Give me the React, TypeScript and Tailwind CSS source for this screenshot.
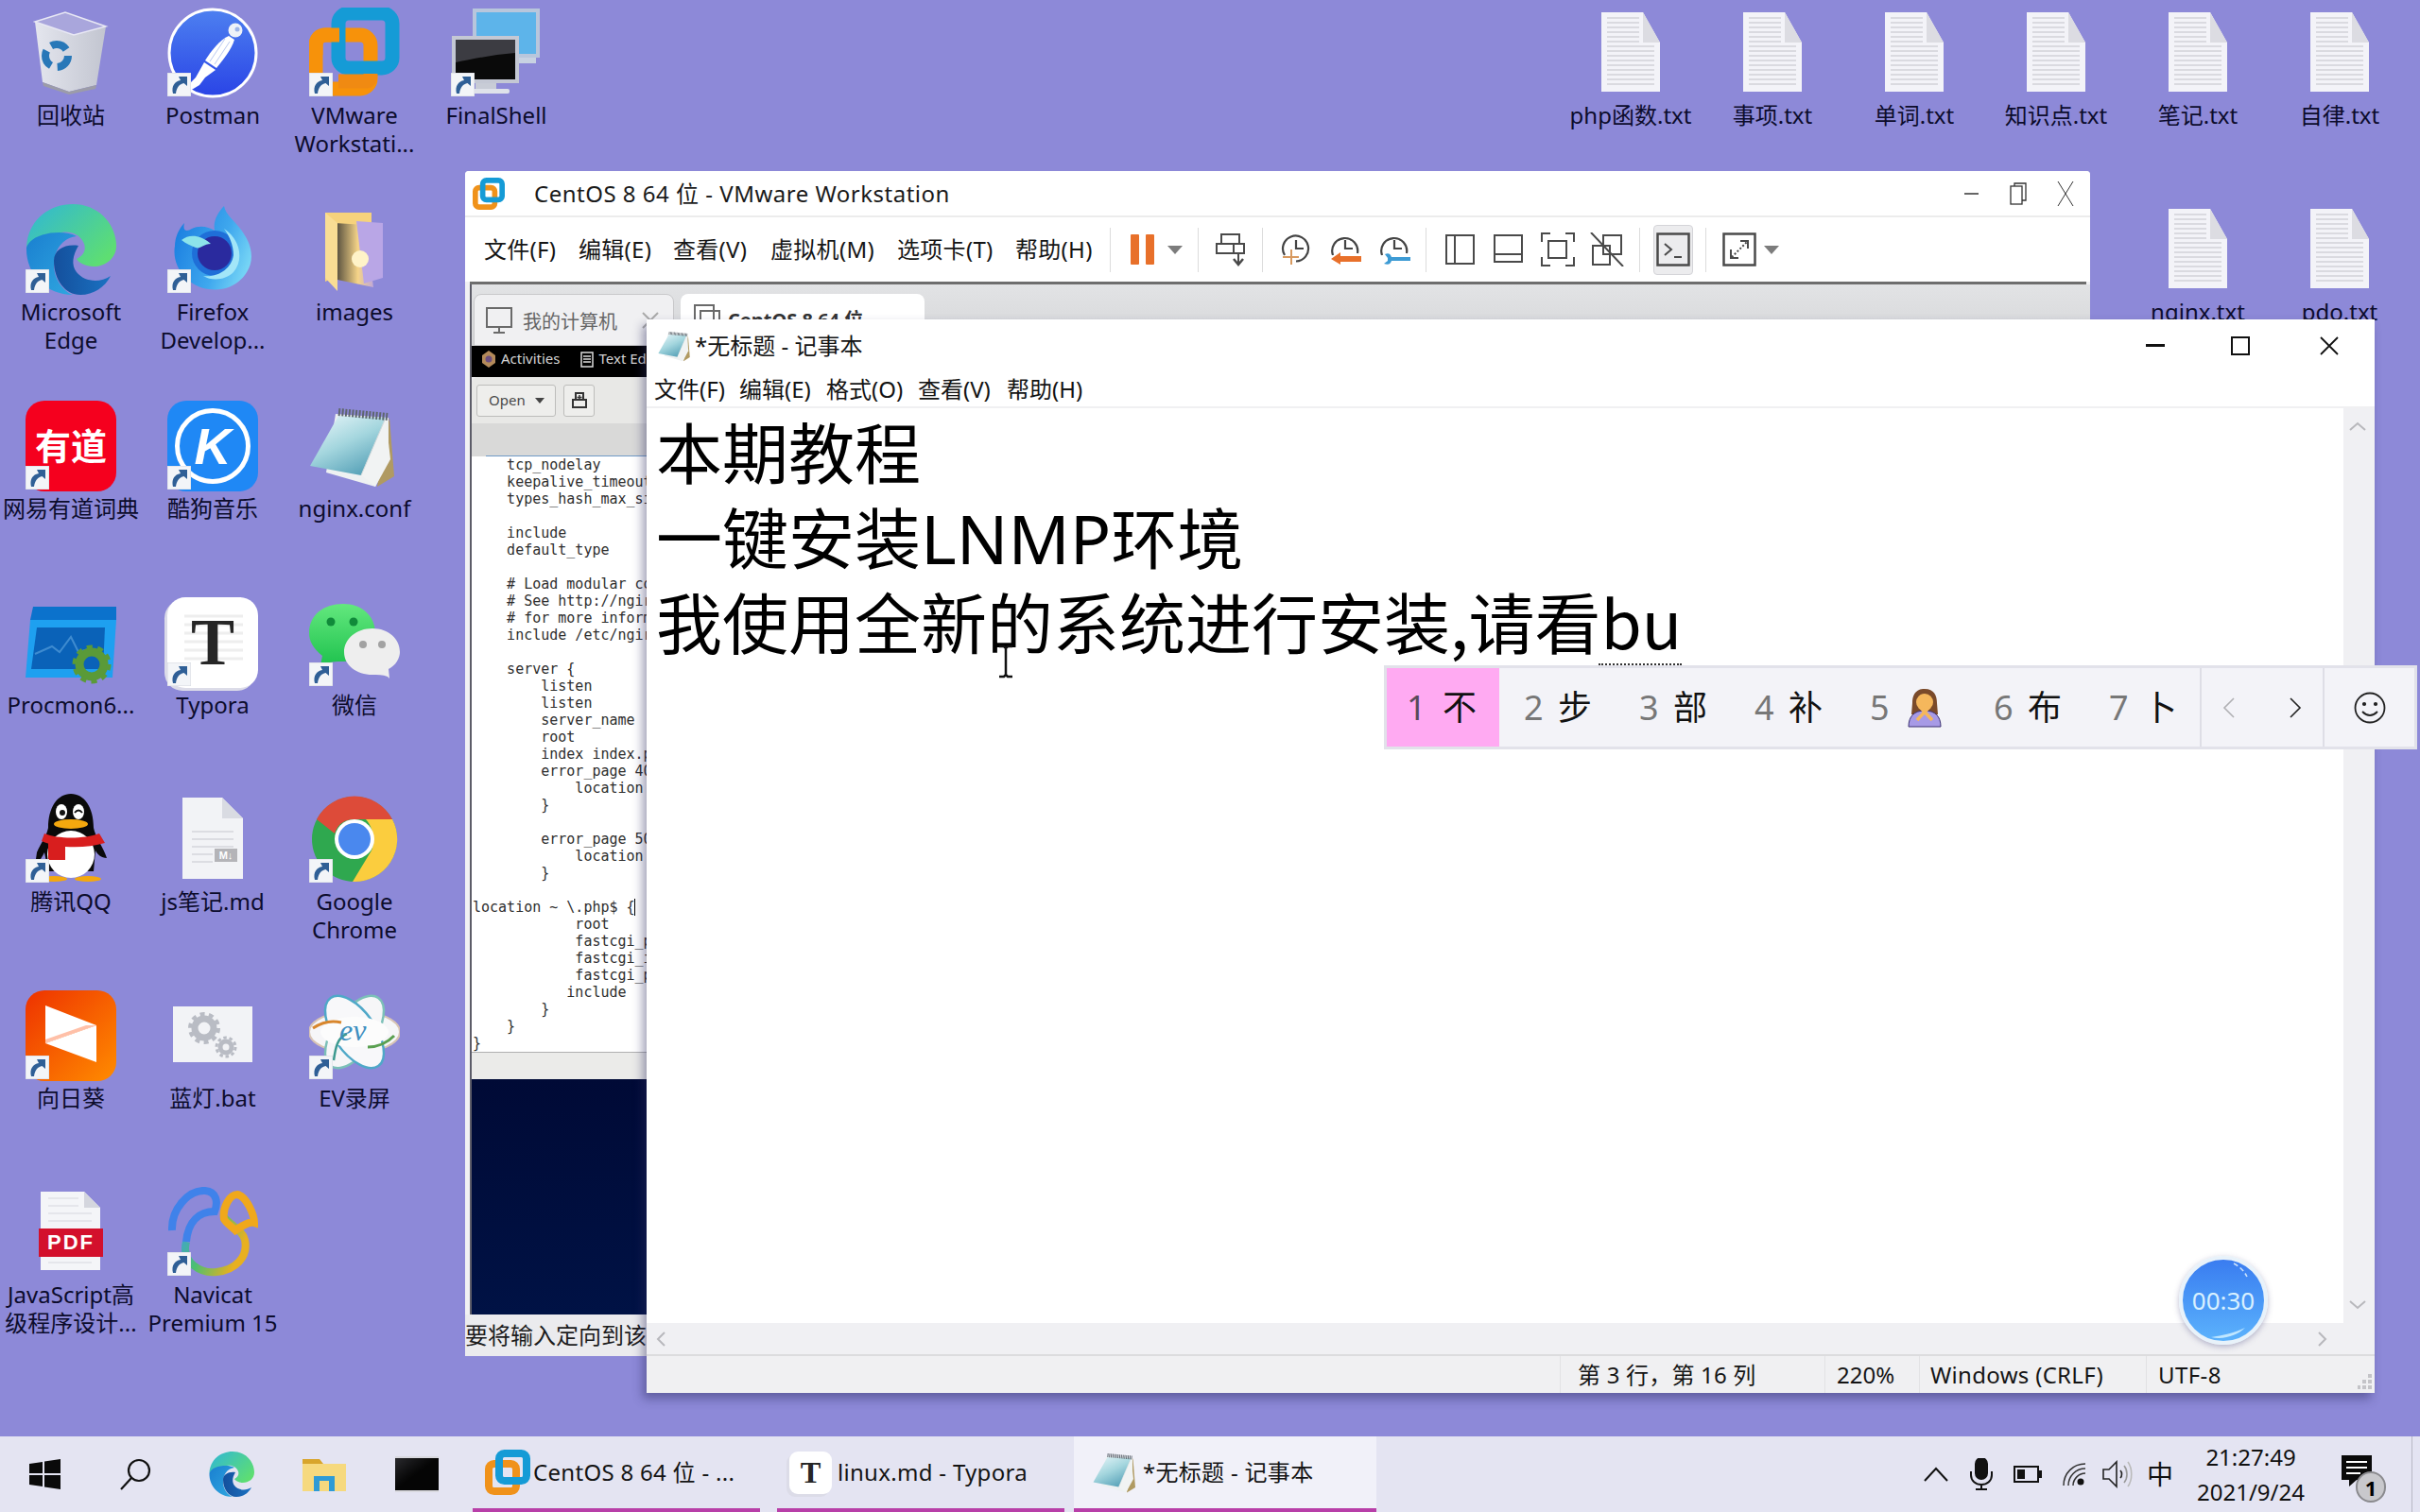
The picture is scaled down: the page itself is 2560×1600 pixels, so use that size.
import React from "react";

const UI = "font-[family-name:'Noto_Sans','Noto_Sans_CJK_SC',sans-serif]";

const Arrow = () => (
  <svg width="25" height="25" viewBox="0 0 25 25" className="absolute left-0 top-[69px]">
    <rect x="0" y="0" width="25" height="25" fill="#f3f5f8" stroke="#d5d8e0" />
    <path d="M6 22 C4 14 8 9 14 8 L12 4 L21 4 L21 14 L17.5 11 C13 12 10 15 9 22Z" fill="#2f5f96" />
  </svg>
);

const S = ({ children, className }: { children: React.ReactNode; className?: string }) => (
  <svg width="96" height="96" viewBox="0 0 96 96" className={className}>{children}</svg>
);

const Recycle = () => (
  <S>
    <defs><linearGradient id="rb" x1="0" x2="1"><stop offset="0" stopColor="#e4e6ee" /><stop offset="1" stopColor="#c2c5d0" /></linearGradient></defs>
    <polygon points="10,15 18,79 46,89 75,82 85,20 51,29" fill="url(#rb)" />
    <polygon points="10,15 42,5 85,20 51,29" fill="#a9a6dc" stroke="#e8e8f4" strokeWidth="1.5" />
    <polygon points="18,79 46,89 75,82 74,86 46,92 19,83" fill="#9c9ca8" />
    <circle cx="33" cy="51" r="12" fill="none" stroke="#2878b8" strokeWidth="8" strokeDasharray="18 7" />
  </S>
);
const Postman = () => (
  <S>
    <defs><linearGradient id="pm" x1="0" x2="0" y1="0" y2="1"><stop offset="0" stopColor="#4d80f0" /><stop offset="1" stopColor="#2a44e6" /></linearGradient></defs>
    <ellipse cx="48" cy="48" rx="46" ry="46" fill="url(#pm)" stroke="#fff" strokeWidth="3" />
    <circle cx="72" cy="24" r="7.5" fill="#eef2f8" />
    <circle cx="74" cy="23" r="2.5" fill="#9db4e8" />
    <path d="M65 30 C56 34 46 46 40 56 L46 60 L52 64 C60 54 68 44 71 34Z" fill="#fff" />
    <path d="M39 58 L51 66 L40 74 L34 82 L24 88 L20 84 L30 74Z" fill="#fff" />
    <path d="M50 60 L66 36 M45 57 L61 33" stroke="#b9c8f0" strokeWidth="1" />
  </S>
);
const VMware = () => (
  <S>
    <rect x="7" y="29" width="58" height="57" rx="11" fill="none" stroke="#f7920a" strokeWidth="15" />
    <rect x="31" y="6" width="57" height="58" rx="11" fill="none" stroke="#159bd6" strokeWidth="15" />
    <path d="M7 50 L7 40 Q7 29 18 29 L32 29" fill="none" stroke="#f7920a" strokeWidth="15" />
    <path d="M31 78 L60 78 Q65 78 65 70" fill="none" stroke="#f08a12" strokeWidth="15" />
  </S>
);
const FinalShell = () => (
  <S>
    <rect x="23" y="1" width="71" height="52" fill="#b8c6dc" />
    <rect x="27" y="5" width="63" height="44" fill="#5db4ea" />
    <rect x="46" y="53" width="44" height="6" fill="#c8d2e2" />
    <rect x="1" y="30" width="71" height="50" fill="#c4c8d4" />
    <rect x="5" y="34" width="63" height="42" fill="#0a0a0a" />
    <path d="M5 34 H68 V48 C44 50 24 54 5 58Z" fill="#3c3c42" />
    <rect x="26" y="80" width="22" height="6" fill="#c8ccd6" />
    <rect x="16" y="86" width="46" height="5" rx="2" fill="#dfe2ea" />
  </S>
);
const Edge = () => (
  <S>
    <defs>
      <linearGradient id="e1" x1="0" x2="1" y1="0" y2="0.7"><stop offset="0" stopColor="#2fb6d8" /><stop offset="1" stopColor="#5ede72" /></linearGradient>
      <linearGradient id="e2" x1="0" x2="1" y1="0" y2="1"><stop offset="0" stopColor="#1a7fd0" /><stop offset="1" stopColor="#30a8e0" /></linearGradient>
      <linearGradient id="e3" x1="0" x2="1"><stop offset="0" stopColor="#144f9c" /><stop offset="1" stopColor="#1a72c2" /></linearGradient>
    </defs>
    <path d="M1 46 C2 18 24 0 50 0 C78 0 96 22 96 44 C96 58 84 66 72 66 C64 66 56 62 54 58 C62 54 64 48 62 42 C58 32 48 28 38 30 C20 32 4 38 1 46Z" fill="url(#e1)" />
    <path d="M1 46 C0 74 22 96 50 96 C40 92 30 80 30 64 C30 50 38 36 54 34 C40 26 6 30 1 46Z" fill="url(#e2)" />
    <path d="M30 60 C30 80 42 96 58 96 C72 96 84 88 90 76 C78 84 62 82 54 72 C48 64 50 54 56 44 C42 42 30 48 30 60Z" fill="url(#e3)" />
  </S>
);
const Firefox = () => (
  <S>
    <defs>
      <linearGradient id="ff" x1="0" x2="1" y1="0.3" y2="0.7"><stop offset="0" stopColor="#1a7ee0" /><stop offset="0.6" stopColor="#3fa8ee" /><stop offset="1" stopColor="#7ad8f6" /></linearGradient>
    </defs>
    <path d="M8 44 C8 36 12 26 18 20 C16 28 20 30 26 26 C34 22 44 24 50 28 C48 18 54 8 60 2 C62 12 72 18 80 30 C90 44 92 60 84 72 C74 88 58 92 44 90 C24 88 4 68 8 44Z" fill="url(#ff)" />
    <circle cx="50" cy="52" r="24" fill="#1f6fd8" />
    <circle cx="50" cy="52" r="18" fill="#2a2a9e" />
    <path d="M15 38 C24 30 38 34 46 42 C38 42 35 48 30 46 C25 44 20 42 15 38Z" fill="#8ce4ea" />
    <path d="M60 26 C76 36 82 58 70 72 C62 80 48 82 38 76 C54 78 68 68 70 54 C70 44 66 34 60 26Z" fill="#a2e6f8" />
  </S>
);
const Folder = () => (
  <S>
    <defs><linearGradient id="sun" x1="0" x2="1" y1="0" y2="0"><stop offset="0" stopColor="#4a4438" /><stop offset="0.6" stopColor="#f5d488" /><stop offset="1" stopColor="#c0a8d8" /></linearGradient></defs>
    <polygon points="17,9 66,9 66,60 17,82" fill="#f6d27c" />
    <polygon points="27,20 60,22 68,88 30,80" fill="url(#sun)" />
    <polygon points="50,18 78,20 78,78 58,84" fill="#b9a6e6" />
    <circle cx="54" cy="58" r="9" fill="#fff3c8" />
    <polygon points="17,9 30,20 30,92 17,78" fill="#f9dd94" />
  </S>
);
const Youdao = () => (
  <div className="w-[96px] h-[96px] rounded-[20px] bg-[#f5001e] flex items-center justify-center text-white font-bold text-[38px] leading-none pb-[2px]">有道</div>
);
const Kugou = () => (
  <div className="w-[96px] h-[96px] rounded-[20px] bg-[#1f88f5] flex items-center justify-center">
    <div className="w-[80px] h-[80px] rounded-full border-[5px] border-white flex items-center justify-center text-white font-bold italic text-[54px] leading-none font-[family-name:'Liberation_Sans',sans-serif]">K</div>
  </div>
);
const NoteIcon = ({ size = 96 }: { size?: number }) => (
  <svg width={size} height={size} viewBox="0 0 96 96">
    <defs><linearGradient id={`n${size}`} x1="0.2" x2="0.8" y1="0" y2="1"><stop offset="0" stopColor="#e0f2f6" /><stop offset="0.45" stopColor="#a4d6de" /><stop offset="1" stopColor="#4f9cb4" /></linearGradient></defs>
    <polygon points="85,18 90,80 72,91 80,40" fill="#b09a62" />
    <polygon points="28,14 84,18 84,62 70,91 18,76" fill="#eef1f2" />
    <polygon points="31,16 81,18 55,79 1,69" fill={`url(#n${size})`} />
    <polygon points="81,18 86,62 70,91 55,79" fill="#f1f3f3" />
    <path d="M55 79 L81 18" stroke="#cfd8da" strokeWidth="1" />
    <line x1="31" y1="12" x2="83" y2="17" stroke="#5e666e" strokeWidth="8" strokeDasharray="2 1.6" />
  </svg>
);
const Procmon = () => (
  <S>
    <polygon points="8,10 96,10 96,24 5,24" fill="#0b72cc" />
    <polygon points="5,24 96,24 92,85 0,85" fill="#1ea0f0" />
    <polygon points="12,32 84,32 82,76 6,76" fill="#0a62b8" />
    <path d="M10 60 L28 52 L36 58 L48 42 L56 58 L70 54" stroke="#3e8bd0" strokeWidth="2" fill="none" />
    <circle cx="70" cy="71" r="13" fill="none" stroke="#5a9a38" strokeWidth="9" />
    <circle cx="70" cy="71" r="18" fill="none" stroke="#5a9a38" strokeWidth="5" strokeDasharray="6 5.3" />
  </S>
);
const Typora = ({ size = 96, lines = false }: { size?: number; lines?: boolean }) => (
  <div className="relative flex items-center justify-center" style={{ width: size, height: size }}>
    <div className="absolute inset-0 rounded-[20%] bg-white shadow-[-3px_3px_0_#dcdce8]" />
    {lines && (
      <svg width="96" height="96" viewBox="0 0 96 96" className="absolute inset-0">
        <path d="M18 20 H80 M18 29 H80 M18 38 H80 M18 47 H80 M18 56 H80 M18 65 H80" stroke="#eeeeee" strokeWidth="3" />
      </svg>
    )}
    <span className="relative font-bold font-[family-name:'Liberation_Serif',serif] text-[#262626] leading-none" style={{ fontSize: size * 0.72 }}>T</span>
  </div>
);
const WeChat = () => (
  <S>
    <defs><linearGradient id="wc" x1="0" x2="0" y1="0" y2="1"><stop offset="0" stopColor="#63e87e" /><stop offset="1" stopColor="#1fc24e" /></linearGradient></defs>
    <path d="M12 72 L14 62 C4 54 0 46 0 38 C0 18 16 7 36 7 C56 7 70 20 70 38 C70 56 56 68 36 68 C28 68 22 68 12 72Z" fill="url(#wc)" />
    <circle cx="23" cy="26" r="4.5" fill="#108a3a" /><circle cx="47" cy="26" r="4.5" fill="#108a3a" />
    <path d="M83 84 L85 86 L84 76 C92 72 96 64 96 58 C96 44 84 33 67 33 C50 33 37 44 37 58 C37 72 50 82 67 82 C72 82 78 82 83 84Z" fill="#eeeeee" />
    <circle cx="57" cy="50" r="4" fill="#a2a2a2" /><circle cx="77" cy="50" r="4" fill="#a2a2a2" />
  </S>
);
const QQ = () => (
  <S>
    <path d="M12 62 C16 52 22 46 24 36 C24 14 34 0 48 0 C62 0 72 14 72 36 C74 46 82 56 86 68 C80 68 76 64 74 60 L72 82 L24 82 L20 62 C18 66 16 70 10 76Z" fill="#0a0a0a" />
    <ellipse cx="38" cy="19" rx="6" ry="8" fill="#fff" /><ellipse cx="56" cy="19" rx="6" ry="8" fill="#fff" />
    <circle cx="39" cy="20" r="3" fill="#111" /><path d="M52 20 Q56 15 60 20" stroke="#111" strokeWidth="2" fill="none" />
    <ellipse cx="48" cy="32" rx="18" ry="5" fill="#f4a80e" />
    <ellipse cx="48" cy="64" rx="25" ry="25" fill="#fff" />
    <path d="M20 42 C34 48 62 48 78 42 L84 52 C64 58 34 58 17 50Z" fill="#d81e1e" />
    <rect x="24" y="50" width="18" height="20" fill="#d81e1e" />
    <ellipse cx="30" cy="90" rx="14" ry="3" fill="#f4a80e" /><ellipse cx="66" cy="90" rx="14" ry="3" fill="#f4a80e" />
  </S>
);
const MdDoc = () => (
  <div className="relative w-[96px] h-[96px]">
    <svg width="96" height="96" viewBox="0 0 96 96" className="absolute inset-0">
      <polygon points="16,4 58,4 80,26 80,90 16,90" fill="#f2f3f6" />
      <polygon points="58,4 80,26 58,26" fill="#d9dbe2" />
      <path d="M26 40 H70 M26 48 H70 M26 56 H70 M26 64 H48 M26 72 H48" stroke="#dcdde2" strokeWidth="2" />
    </svg>
    <div className="absolute left-[50px] top-[58px] w-[24px] h-[14px] bg-[#b4b4b8] text-white text-[11px] font-bold leading-[14px] text-center font-[family-name:'Liberation_Sans',sans-serif]">M↓</div>
  </div>
);
const Chrome = () => (
  <S>
    <circle cx="48" cy="48" r="45" fill="#2fa84f" />
    <path d="M8 27 A45 45 0 0 1 88 27 L48 27 C38 27 30 32 27 42Z" fill="#dd4b39" />
    <path d="M88 27 A45 45 0 0 1 46 93 L66 60 C70 50 68 36 60 27Z" fill="#fbcd3e" />
    <circle cx="48" cy="48" r="21" fill="#fff" /><circle cx="48" cy="48" r="17" fill="#4a88ee" />
  </S>
);
const Sunflower = () => (
  <S>
    <defs><linearGradient id="sf" x1="0" x2="1" y1="0" y2="1"><stop offset="0" stopColor="#ee3200" /><stop offset="1" stopColor="#ff8c00" /></linearGradient></defs>
    <rect x="0" y="0" width="96" height="96" rx="20" fill="url(#sf)" />
    <polygon points="21,16 75,37 21,56" fill="#fff" />
    <polygon points="75,37 75,76 21,56" fill="#fff" />
    <polygon points="21,56 75,37 64,37 21,52" fill="#ffc0a8" />
  </S>
);
const BatIcon = () => (
  <S>
    <rect x="6" y="17" width="84" height="59" fill="#f2f3f6" />
    <circle cx="39" cy="40" r="10" fill="none" stroke="#b9bcc4" strokeWidth="7" />
    <circle cx="39" cy="40" r="15" fill="none" stroke="#b9bcc4" strokeWidth="4" strokeDasharray="5 4.4" />
    <circle cx="62" cy="60" r="6" fill="none" stroke="#b9bcc4" strokeWidth="5" />
    <circle cx="62" cy="60" r="10" fill="none" stroke="#b9bcc4" strokeWidth="3" strokeDasharray="3.5 2.8" />
  </S>
);
const EV = () => (
  <div className="relative w-[96px] h-[96px]">
    <svg width="96" height="96" viewBox="0 0 96 96" className="absolute inset-0">
      <ellipse cx="48" cy="44" rx="48" ry="22" fill="#f6f6f8" stroke="#d8c4b4" strokeWidth="2" />
      <ellipse cx="48" cy="44" rx="22" ry="44" transform="rotate(35 48 44)" fill="#f6f6f8" stroke="#7cc0b8" strokeWidth="2.5" />
      <ellipse cx="48" cy="44" rx="22" ry="44" transform="rotate(-35 48 44)" fill="#f8f8fa" stroke="#4fa8c8" strokeWidth="2.5" />
      <ellipse cx="48" cy="44" rx="36" ry="16" fill="#fcfcfc" />
      <path d="M4 40 C16 32 26 32 34 34" stroke="#d8862c" strokeWidth="3" fill="none" />
      <path d="M62 60 C74 60 84 54 90 48" stroke="#5aa050" strokeWidth="3" fill="none" />
      <path d="M26 74 C28 60 30 50 40 46" stroke="#3d9a90" strokeWidth="2.5" fill="none" />
    </svg>
    <span className="absolute left-[32px] top-[26px] text-[32px] leading-none italic text-[#3d8fc0] font-[family-name:'Liberation_Serif',serif]">ev</span>
  </div>
);
const Pdf = () => (
  <div className="relative w-[96px] h-[96px]">
    <svg width="96" height="96" viewBox="0 0 96 96" className="absolute inset-0">
      <polygon points="16,5 62,5 79,22 79,88 16,88" fill="#f4f5f8" />
      <polygon points="62,5 79,22 62,22" fill="#d4d6de" />
      <path d="M24 12 H56 M24 20 H56 M24 28 H70 M24 36 H70 M24 80 H70" stroke="#e0e1e6" strokeWidth="1.5" />
    </svg>
    <div className="absolute left-[14px] top-[44px] w-[68px] h-[30px] bg-[#d3102c] text-white font-bold text-[22px] leading-[30px] tracking-[2px] text-center font-[family-name:'Liberation_Sans',sans-serif]">PDF</div>
  </div>
);
const Navicat = () => (
  <S>
    <defs><linearGradient id="nv" x1="0" x2="1" y1="0" y2="0.4"><stop offset="0" stopColor="#3fa0d8" /><stop offset="0.45" stopColor="#4cc070" /><stop offset="1" stopColor="#e8b020" /></linearGradient></defs>
    <path d="M20 58 C14 80 36 92 52 90 C72 88 86 74 82 56 C80 46 66 40 60 32" fill="none" stroke="url(#nv)" strokeWidth="8" />
    <path d="M5 46 C4 24 22 3 40 4 C52 5 54 16 50 26 C34 26 22 36 20 58" fill="none" stroke="#3f82ea" strokeWidth="8" />
    <path d="M60 34 C58 22 66 8 74 8 C84 10 92 30 92 38 C86 36 78 42 72 46 C68 42 62 38 60 34Z" fill="none" stroke="#f0a81c" strokeWidth="8" />
  </S>
);
const TxtIcon = () => (
  <svg width="62" height="84" viewBox="0 0 62 84">
    <polygon points="0,0 44,0 62,32 62,84 0,84" fill="#f3f3f8" />
    <polygon points="44,0 62,32 44,32" fill="#dcdce2" />
    <path d="M6 6 H40 M6 11 H40 M6 16 H40 M6 21 H40 M6 26 H40 M6 31 H40 M6 36 H56 M6 41 H56 M6 46 H56 M6 51 H56 M6 56 H56 M6 61 H56 M6 66 H56 M6 71 H56 M6 76 H56" stroke="#d2d2d8" strokeWidth="1.4" />
  </svg>
);

type Item = { lines: string[]; icon?: React.ReactNode; link?: boolean };
const left: Item[] = [
  { lines: ["回收站"], icon: <Recycle /> },
  { lines: ["Microsoft", "Edge"], icon: <Edge />, link: true },
  { lines: ["网易有道词典"], icon: <Youdao />, link: true },
  { lines: ["Procmon6..."], icon: <Procmon /> },
  { lines: ["腾讯QQ"], icon: <QQ />, link: true },
  { lines: ["向日葵"], icon: <Sunflower />, link: true },
  { lines: ["JavaScript高", "级程序设计..."], icon: <Pdf /> },
  { lines: ["Postman"], icon: <Postman />, link: true },
  { lines: ["Firefox", "Develop..."], icon: <Firefox />, link: true },
  { lines: ["酷狗音乐"], icon: <Kugou />, link: true },
  { lines: ["Typora"], icon: <Typora lines />, link: true },
  { lines: ["js笔记.md"], icon: <MdDoc /> },
  { lines: ["蓝灯.bat"], icon: <BatIcon /> },
  { lines: ["Navicat", "Premium 15"], icon: <Navicat />, link: true },
  { lines: ["VMware", "Workstati..."], icon: <VMware />, link: true },
  { lines: ["images"], icon: <Folder /> },
  { lines: ["nginx.conf"], icon: <NoteIcon /> },
  { lines: ["微信"], icon: <WeChat />, link: true },
  { lines: ["Google", "Chrome"], icon: <Chrome />, link: true },
  { lines: ["EV录屏"], icon: <EV />, link: true },
  { lines: [] },
  { lines: ["FinalShell"], icon: <FinalShell />, link: true },
];

const DeskIcon = ({ it }: { it: Item }) => (
  <div className="flex flex-col items-center pt-2 w-[150px] h-[208px]">
    {it.icon && (
      <div className="relative w-[96px] h-[96px]">
        {it.icon}
        {it.link && <Arrow />}
      </div>
    )}
    {it.lines.length > 0 && (
      <div className="mt-[3px] text-center text-[24px] leading-[30px] text-[#0c0c2c] whitespace-nowrap">
        {it.lines.map((l) => <div key={l}>{l}</div>)}
      </div>
    )}
  </div>
);

const TxtFile = ({ name }: { name: string }) => (
  <div className="flex flex-col items-center pt-[13px] w-[150px]">
    <TxtIcon />
    <div className="mt-[10px] text-[24px] leading-[30px] text-[#0c0c2c] whitespace-nowrap">{name}</div>
  </div>
);

const code = [
  "    tcp_nodelay",
  "    keepalive_timeout",
  "    types_hash_max_si",
  "",
  "    include",
  "    default_type",
  "",
  "    # Load modular co",
  "    # See http://ngir",
  "    # for more inform",
  "    include /etc/ngir",
  "",
  "    server {",
  "        listen",
  "        listen",
  "        server_name",
  "        root",
  "        index index.p",
  "        error_page 40",
  "            location",
  "        }",
  "",
  "        error_page 50",
  "            location",
  "        }",
  "",
  "location ~ \\.php$ {",
  "            root",
  "            fastcgi_p",
  "            fastcgi_i",
  "            fastcgi_p",
  "           include",
  "        }",
  "    }",
  "}",
];

const Sep = ({ ml }: { ml: string }) => <div className={`w-px h-[47px] bg-[#dcdcdc] shrink-0 ${ml}`} />;

const ClockBase = ({ children, arc = "M4 22 A13.5 13.5 0 1 1 30 20" }: { children?: React.ReactNode; arc?: string }) => (
  <svg width="34" height="32" viewBox="0 0 34 32" className="ml-[18px] shrink-0">
    <path d={arc} fill="none" stroke="#444" strokeWidth="2.2" />
    <path d="M17 6 V15 H25" fill="none" stroke="#444" strokeWidth="2.2" />
    {children}
  </svg>
);

const VMwareSmall = ({ size }: { size: number }) => (
  <svg width={size} height={size} viewBox="0 0 96 96" className="shrink-0">
    <rect x="8" y="30" width="58" height="58" rx="11" fill="none" stroke="#f0921a" strokeWidth="16" />
    <rect x="30" y="8" width="58" height="58" rx="11" fill="none" stroke="#159bd6" strokeWidth="16" />
  </svg>
);

const Toolbar = () => (
  <div className="h-[70px] flex items-center pl-[20px] bg-white border-t-2 border-[#ececec] shrink-0 text-[24px] text-[#161616]">
    {[["文件(F)", "w-[100px]"], ["编辑(E)", "w-[100px]"], ["查看(V)", "w-[103px]"], ["虚拟机(M)", "w-[134px]"], ["选项卡(T)", "w-[125px]"], ["帮助(H)", "w-[100px]"]].map(([t, w]) => (
      <span key={t} className={`${w} shrink-0 whitespace-nowrap tracking-[0.3px]`}>{t}</span>
    ))}
    <Sep ml="" />
    <svg width="25" height="32" viewBox="0 0 25 32" className="ml-[21px] shrink-0"><rect x="0" y="0" width="9" height="32" rx="1" fill="#e8702a" /><rect x="16" y="0" width="9" height="32" rx="1" fill="#e8702a" /></svg>
    <svg width="16" height="9" viewBox="0 0 16 9" className="ml-[14px] shrink-0"><polygon points="0,0 16,0 8,9" fill="#7c7c7c" /></svg>
    <Sep ml="ml-[16px]" />
    <svg width="31" height="35" viewBox="0 0 31 35" className="ml-[18px] shrink-0" fill="none" stroke="#4a4a4a" strokeWidth="2">
      <rect x="6" y="1" width="19" height="10" /><rect x="1" y="11" width="18" height="10" /><rect x="19" y="11" width="11" height="10" />
      <path d="M24 21 V31" /><path d="M19 27 L24 33 L29 27" strokeWidth="2.5" />
    </svg>
    <Sep ml="ml-[18px]" />
    <ClockBase arc="M5 22 A13.5 13.5 0 1 1 17 28.5"><path d="M12 16 V32 M3 24 H20" stroke="#d89a60" strokeWidth="2" /></ClockBase>
    <ClockBase><path d="M2 26 L12 19 V23 H34 V29 H12 V32Z" fill="#e8702a" /></ClockBase>
    <ClockBase><path d="M7 21 C11 19 13 21 14 24 H34 V28 H14 C13 31 11 33 6 31 L10 28 V25Z" fill="#3d9bd4" /></ClockBase>
    <Sep ml="ml-[16px]" />
    <svg width="31" height="32" viewBox="0 0 31 32" className="ml-[20px] shrink-0" fill="none" stroke="#4a4a4a" strokeWidth="2"><rect x="1" y="1" width="29" height="30" /><path d="M10 1 V31" /></svg>
    <svg width="31" height="32" viewBox="0 0 31 32" className="ml-[20px] shrink-0" fill="none" stroke="#4a4a4a" strokeWidth="2"><rect x="1" y="1" width="29" height="28" /><path d="M1 21 H30" /></svg>
    <svg width="36" height="36" viewBox="0 0 36 36" className="ml-[19px] shrink-0" fill="none" stroke="#4a4a4a" strokeWidth="2"><path d="M10 1 H1 V10 M26 1 H35 V10 M10 35 H1 V26 M26 35 H35 V26" /><rect x="8" y="9" width="19" height="18" /></svg>
    <svg width="36" height="36" viewBox="0 0 36 36" className="ml-[16px] shrink-0" fill="none" stroke="#4a4a4a" strokeWidth="2"><rect x="14" y="3" width="19" height="20" /><rect x="3" y="14" width="18" height="20" /><path d="M1 0 L35 36" /></svg>
    <Sep ml="ml-[16px]" />
    <div className="ml-[14px] w-[42px] h-[53px] rounded-[4px] bg-[#ececee] border border-[#d4d4d8] flex items-center justify-center shrink-0">
      <svg width="36" height="36" viewBox="0 0 36 36" fill="none" stroke="#4a4a4a"><rect x="1.5" y="1.5" width="33" height="33" strokeWidth="2.5" /><path d="M9 12 L16 18 L9 24" strokeWidth="2" /><path d="M19 26 H27" strokeWidth="2" /></svg>
    </div>
    <Sep ml="ml-[13px]" />
    <svg width="36" height="36" viewBox="0 0 36 36" className="ml-[17px] shrink-0" fill="none" stroke="#4a4a4a"><rect x="1.5" y="1.5" width="33" height="33" strokeWidth="2.5" /><path d="M10 26 L26 10" strokeWidth="2" strokeDasharray="2 2" /><path d="M19 9 H27 V17 M9 18 V27 H17" strokeWidth="2" /></svg>
    <svg width="16" height="9" viewBox="0 0 16 9" className="ml-[8px] shrink-0"><polygon points="0,0 16,0 8,9" fill="#7c7c7c" /></svg>
  </div>
);

const VmWindow = () => (
  <div className="absolute left-[492px] top-[181px] w-[1719px] h-[1254px] flex flex-col bg-[#f1f1f3] rounded-t-[4px] overflow-hidden">
    <div className="h-[47px] flex items-center bg-white shrink-0">
      <div className="ml-[8px]"><VMwareSmall size={34} /></div>
      <span className="ml-[31px] text-[24px] text-[#1a1a1a] whitespace-nowrap tracking-[0.5px]">CentOS 8 64 位 - VMware Workstation</span>
      <div className="ml-auto mr-[17px] flex items-center gap-[32px]">
        <svg width="16" height="16" viewBox="0 0 16 16"><path d="M0 8 H15" stroke="#333" strokeWidth="1.5" /></svg>
        <svg width="18" height="24" viewBox="0 0 18 24" fill="none" stroke="#333" strokeWidth="1.3"><path d="M5 4 V1 H17 V19 H13" /><rect x="1" y="4" width="12" height="19" fill="#fff" /></svg>
        <svg width="18" height="28" viewBox="0 0 18 28"><path d="M1 1 L17 27 M17 1 L1 27" stroke="#333" strokeWidth="1" /></svg>
      </div>
    </div>
    <Toolbar />
    <div className="h-[3px] bg-[#6e6e6e] shrink-0 ml-[5px] mr-[4px]" />
    <div className="flex-1 flex flex-col min-h-0 pl-[5px]">
      <div className="border-l-2 border-[#5c5c68] flex-1 flex flex-col min-h-0">
        <div className="h-[65px] shrink-0 flex items-end pl-[2px] gap-[7px] bg-gradient-to-b from-[#e2e3e5] to-[#d5d6d8]">
          <div className="w-[212px] h-[55px] rounded-t-[8px] border border-[#c8c8ca] bg-[#f0f0f2] flex items-center pl-[12px] text-[20px] text-[#666]">
            <svg width="28" height="32" viewBox="0 0 28 32" fill="none" stroke="#6a6a6a" strokeWidth="2"><rect x="1" y="3" width="26" height="20" /><path d="M14 23 V28 M8 29 H20" /></svg>
            <span className="ml-[11px] whitespace-nowrap translate-y-[2px]">我的计算机</span>
            <svg width="18" height="18" viewBox="0 0 18 18" className="ml-[26px]"><path d="M1 1 L17 17 M17 1 L1 17" stroke="#aaa" strokeWidth="2" /></svg>
          </div>
          <div className="w-[258px] h-[55px] rounded-t-[8px] bg-white flex items-center pl-[14px] text-[20px] font-bold text-[#333]">
            <svg width="28" height="32" viewBox="0 0 28 32" fill="none" stroke="#6a6a6a" strokeWidth="2" className="-translate-y-[3px]"><rect x="1" y="3" width="20" height="24" /><rect x="7" y="9" width="20" height="22" /></svg>
            <span className="ml-[8px] whitespace-nowrap">CentOS 8 64 位</span>
          </div>
        </div>
        <div className="h-[33px] bg-black shrink-0 flex items-center text-[15px] text-[#d4d4d4] pl-[10px] pb-[6px]">
          <svg width="16" height="20" viewBox="0 0 16 20"><polygon points="8,1 15,6 15,14 8,19 1,14 1,6" fill="#b38a5a" /><circle cx="8" cy="10" r="3.5" fill="#6c4f80" /></svg>
          <span className="ml-[5px]">Activities</span>
          <svg width="14" height="18" viewBox="0 0 14 18" className="ml-[21px]" fill="none" stroke="#ddd" strokeWidth="1.5"><rect x="1" y="2" width="12" height="15" /><path d="M3 6 H11 M3 9 H11 M3 12 H11" /></svg>
          <span className="ml-[6px] whitespace-nowrap">Text Ed</span>
        </div>
        <div className="h-[49px] bg-[#e8e8e6] shrink-0 flex items-center pl-[5px] gap-[8px] rounded-tl-[6px]">
          <div className="w-[84px] h-[34px] rounded-[3px] border border-[#bdbdbb] bg-[#eeeeec] flex items-center pl-[12px] text-[15px] text-[#4a4a4a]">
            Open<svg width="10" height="6" viewBox="0 0 10 6" className="ml-[10px]"><polygon points="0,0 10,0 5,6" fill="#444" /></svg>
          </div>
          <div className="w-[33px] h-[34px] rounded-[3px] border border-[#bdbdbb] bg-[#eeeeec] flex items-center justify-center">
            <svg width="16" height="18" viewBox="0 0 16 18" fill="none" stroke="#333" strokeWidth="2"><path d="M4 7 V1 H12 V7 M1 8 H15 V16 H1Z" /><path d="M8 3 V8 M5.5 5.5 H10.5" strokeWidth="1.5" /></svg>
          </div>
        </div>
        <div className="h-[36px] bg-[#d9d9d8] shrink-0 pl-[15px] flex items-end"><div className="h-[2px] w-full bg-[#6f9ac6]" /></div>
        <div className="flex-1 min-h-0 bg-white overflow-hidden relative pl-[1px] -mt-[1px] font-[family-name:'DejaVu_Sans_Mono',monospace] text-[15px] leading-[18px] text-[#2e2e2e] whitespace-pre">
          {code.map((l, i) => <div key={i} className="h-[18px]">{l}</div>)}
          <div className="absolute left-[172px] top-[468px] w-px h-[18px] bg-black" />
        </div>
        <div className="h-[29px] bg-[#ebebe9] border-t border-[#b0b0b0] shrink-0" />
        <div className="h-[249px] shrink-0 bg-gradient-to-b from-[#000a36] to-[#001245]" />
      </div>
      <div className="h-[44px] -ml-[5px] shrink-0 flex items-center text-[24px] text-[#1c1c1c] bg-[#ebebee] whitespace-nowrap">要将输入定向到该</div>
    </div>
  </div>
);

const Notepad = () => (
  <div className="absolute left-[684px] top-[338px] w-[1828px] h-[1136px] flex flex-col bg-white shadow-[-4px_6px_10px_rgba(40,40,90,0.45)] text-[24px] text-[#141414]">
    <div className="h-[55px] flex items-center shrink-0">
      <div className="ml-[12px]"><NoteIcon size={36} /></div>
      <span className="ml-[3px] whitespace-nowrap">*无标题 - 记事本</span>
      <div className="ml-auto mr-[38px] flex items-center">
        <svg width="20" height="4" viewBox="0 0 20 4"><rect width="20" height="3" fill="#111" /></svg>
        <svg width="20" height="20" viewBox="0 0 20 20" className="ml-[70px]"><rect x="1" y="1" width="18" height="18" fill="none" stroke="#111" strokeWidth="2" /></svg>
        <svg width="20" height="20" viewBox="0 0 20 20" className="ml-[74px]"><path d="M1 1 L19 19 M19 1 L1 19" stroke="#111" strokeWidth="1.8" /></svg>
      </div>
    </div>
    <div className="h-[39px] flex items-center pl-[8px] shrink-0 border-b-2 border-[#f0f0f2]">
      {[["文件(F)", "w-[90px]"], ["编辑(E)", "w-[92px]"], ["格式(O)", "w-[97px]"], ["查看(V)", "w-[94px]"], ["帮助(H)", "w-[90px]"]].map(([t, w]) => (
        <span key={t} className={`${w} whitespace-nowrap`}>{t}</span>
      ))}
    </div>
    <div className="flex-1 flex min-h-0">
      <div className="flex-1 pl-[10px] text-[70px] leading-[90px] text-black font-[family-name:'Noto_Sans_CJK_SC',sans-serif] whitespace-nowrap">
        <div>本期教程</div>
        <div>一键安装<span className="text-[72px] leading-none font-[family-name:'Noto_Sans',sans-serif]">LNMP</span>环境</div>
        <div>我使用全新的系统进行安装,请看bu</div>
      </div>
      <div className="w-[33px] bg-[#f0f0f3] flex flex-col items-center justify-between py-[14px] pr-[3px]">
        <svg width="18" height="10" viewBox="0 0 18 10"><path d="M1 9 L9 2 L17 9" fill="none" stroke="#b8b8bc" strokeWidth="2" /></svg>
        <svg width="18" height="10" viewBox="0 0 18 10"><path d="M1 1 L9 8 L17 1" fill="none" stroke="#b8b8bc" strokeWidth="2" /></svg>
      </div>
    </div>
    <div className="h-[33px] bg-[#f0f0f3] shrink-0 flex items-center justify-between pl-[10px] pr-[50px]">
      <svg width="10" height="16" viewBox="0 0 10 16"><path d="M9 1 L2 8 L9 15" fill="none" stroke="#b8b8bc" strokeWidth="2" /></svg>
      <svg width="10" height="16" viewBox="0 0 10 16"><path d="M1 1 L8 8 L1 15" fill="none" stroke="#b8b8bc" strokeWidth="2" /></svg>
    </div>
    <div className="h-[41px] bg-[#f0f0f2] border-t-2 border-[#dcdcde] shrink-0 flex items-center pl-[966px] relative">
      <div className="w-[280px] h-full flex items-center pl-[18px] border-l border-[#e2e2e4] whitespace-nowrap tracking-[0.2px]">第 3 行，第 16 列</div>
      <div className="w-[100px] h-full flex items-center pl-[12px] border-l border-[#e2e2e4]">220%</div>
      <div className="w-[240px] h-full flex items-center pl-[11px] border-l border-[#e2e2e4] whitespace-nowrap tracking-[0.3px]">Windows (CRLF)</div>
      <div className="flex-1 h-full flex items-center pl-[12px] border-l border-[#e2e2e4] tracking-[0.4px]">UTF-8</div>
      <svg width="16" height="20" viewBox="0 0 16 20" className="absolute right-[2px] bottom-[2px]"><path d="M11 2h4v4h-4zM11 8h4v4h-4zM5 8h4v4H5zM11 14h4v4h-4zM5 14h4v4H5zM-1 14h4v4h-4z" fill="#c4c4c8" /></svg>
    </div>
  </div>
);

const Cand = ({ n, c, w = "w-[122px]", pink }: { n: string; c: React.ReactNode; w?: string; pink?: boolean }) => (
  <div className={`${w} h-full flex items-center shrink-0 ${pink ? "pl-[21px] bg-[#ffaaf2]" : "pl-[26px]"}`}>
    <span className={`w-[20px] text-center ${pink ? "text-[#5a4a5a]" : "text-[#777]"} font-[family-name:'Noto_Sans',sans-serif]`}>{n}</span>
    <span className={`${pink ? "ml-[18px]" : "ml-[16px]"} w-[36px] text-center text-[#111] flex justify-center`}>{c}</span>
  </div>
);

const Candidates = () => (
  <div className="absolute left-[1464px] top-[704px] w-[1093px] h-[89px] flex bg-[#f3f3f8] border-[3px] border-[#e2e2ea] text-[36px] leading-none">
    <Cand n="1" c="不" pink w="w-[119px]" />
    <Cand n="2" c="步" />
    <Cand n="3" c="部" />
    <Cand n="4" c="补" />
    <Cand n="5" w="w-[131px]" c={
      <svg width="38" height="42" viewBox="0 0 38 42" className="shrink-0 ml-[8px]">
        <path d="M19 1 C29 1 32 8 32 16 L33 28 L5 28 L6 16 C6 8 9 1 19 1Z" fill="#7a4a2a" />
        <circle cx="19" cy="15" r="9" fill="#f5b75c" />
        <path d="M2 41 C2 30 8 24 19 24 C30 24 36 30 36 41Z" fill="#a79ae6" stroke="#3a3070" strokeWidth="1" />
        <path d="M11 34 L24 20 M27 34 L14 20" stroke="#f5b75c" strokeWidth="3.5" />
      </svg>
    } />
    <Cand n="6" c="布" />
    <Cand n="7" c="卜" />
    <div className="w-[130px] h-full flex items-center justify-between px-[22px] border-l-2 border-[#dedee6] shrink-0">
      <svg width="14" height="22" viewBox="0 0 14 22"><path d="M12 1 L2 11 L12 21" fill="none" stroke="#b0b0b4" strokeWidth="1.6" /></svg>
      <svg width="14" height="22" viewBox="0 0 14 22"><path d="M2 1 L12 11 L2 21" fill="none" stroke="#222" strokeWidth="1.6" /></svg>
    </div>
    <div className="flex-1 h-full flex items-center justify-center border-l-2 border-[#dedee6]">
      <svg width="34" height="34" viewBox="0 0 34 34" fill="none" stroke="#222" strokeWidth="1.8"><circle cx="17" cy="17" r="15.5" /><circle cx="11" cy="13" r="1.2" fill="#222" /><circle cx="23" cy="13" r="1.2" fill="#222" /><path d="M9 21 Q17 29 25 21" /></svg>
    </div>
  </div>
);

const Timer = () => (
  <div className="absolute left-[2305px] top-[1329px] w-[94px] h-[94px] rounded-full border-[4px] border-[#e8f2fa] bg-gradient-to-b from-[#3a7cf0] to-[#5cb2fc] shadow-[0_2px_6px_rgba(60,60,120,0.35)] flex items-center justify-center text-[26px] text-[#d8f0ff] font-[family-name:'Noto_Sans',sans-serif]">
    <svg width="86" height="86" viewBox="0 0 86 86" className="absolute inset-0" fill="none"><path d="M54 4 C60 7 65 12 68 18" stroke="#cfe4fa" strokeWidth="1.5" strokeDasharray="5 3" /><path d="M30 82 C44 85 58 80 66 72 C54 78 42 80 30 82Z" fill="#bfe6ff" /></svg>
    <span className="relative">00:30</span>
  </div>
);

const TaskBtn = ({ w, icon, text, active, ml }: { w: string; icon: React.ReactNode; text: string; active?: boolean; ml: string }) => (
  <div className={`${w} ${ml} h-full flex items-center shrink-0 border-b-4 border-[#b83fa8] ${active ? "bg-[#f1f1f9]" : ""}`}>
    {icon}
    <span className="ml-[3px] text-[24px] text-[#141414] whitespace-nowrap tracking-[0.3px]">{text}</span>
  </div>
);

const Taskbar = () => (
  <div className="h-[80px] shrink-0 bg-[#e4e4f2] flex items-center relative">
    <div className="w-[94px] h-full flex items-center justify-center shrink-0">
      <svg width="33" height="32" viewBox="0 0 33 32"><path d="M0 5 L14 3 V15 H0Z M16 2.5 L33 0 V15 H16Z M0 17 H14 V29 L0 27Z M16 17 H33 V32 L16 29.5Z" fill="#0a0a0a" /></svg>
    </div>
    <div className="w-[98px] h-full flex items-center justify-center shrink-0">
      <svg width="34" height="34" viewBox="0 0 34 34" fill="none" stroke="#111" strokeWidth="2.2"><circle cx="21" cy="13" r="11" /><path d="M13 21 L2 33" /></svg>
    </div>
    <div className="w-[5px] shrink-0" />
    <div className="w-[96px] h-full flex items-center justify-center shrink-0"><div className="scale-[0.5]"><Edge /></div></div>
    <div className="w-[2px] shrink-0" />
    <div className="w-[96px] h-full flex items-center justify-center shrink-0">
      <svg width="46" height="36" viewBox="0 0 46 36"><path d="M0 2 H18 L22 7 V12 H0Z" fill="#d8a52c" /><rect x="0" y="7" width="46" height="29" fill="#f6d97e" /><path d="M12 36 V20 H34 V36 H28 V25 H18 V36Z" fill="#2e9bd6" /></svg>
    </div>
    <div className="w-[2px] shrink-0" />
    <div className="w-[96px] h-full flex items-center justify-center shrink-0">
      <div className="w-[46px] h-[38px] bg-gradient-to-br from-[#2a2a2e] via-[#050505] to-[#050505] border-y-[2px] border-[#d8d8de]" />
    </div>
    <TaskBtn ml="ml-[11px]" w="w-[304px]" text="CentOS 8 64 位 - ..." icon={<div className="ml-[13px]"><VMwareSmall size={48} /></div>} />
    <TaskBtn ml="ml-[18px]" w="w-[304px]" text="linux.md - Typora" icon={<div className="ml-[13px] mr-[3px]"><Typora size={45} /></div>} />
    <TaskBtn ml="ml-[10px]" w="w-[320px]" active text="*无标题 - 记事本" icon={<div className="ml-[20px] mr-[2px]"><NoteIcon size={48} /></div>} />
    <div className="flex-1" />
    <div className="w-[48px] h-full flex items-center justify-center"><svg width="26" height="16" viewBox="0 0 26 16"><path d="M1 15 L13 2 L25 15" fill="none" stroke="#111" strokeWidth="2" /></svg></div>
    <div className="w-[47px] h-full flex items-center justify-center"><svg width="24" height="34" viewBox="0 0 24 34" fill="none" stroke="#111" strokeWidth="2"><rect x="6" y="0" width="12" height="22" rx="6" fill="#111" /><path d="M1 14 V18 C1 24 6 28 12 28 C18 28 23 24 23 18 V14 M12 28 V33 M6 33 H18" /></svg></div>
    <div className="w-[51px] h-full flex items-center justify-center"><svg width="30" height="18" viewBox="0 0 30 18" fill="none" stroke="#111" strokeWidth="2"><rect x="1" y="1" width="25" height="16" /><rect x="4" y="4" width="8" height="10" fill="#111" stroke="none" /><rect x="27" y="5" width="3" height="8" fill="#111" stroke="none" /></svg></div>
    <div className="w-[48px] h-full flex items-center justify-center"><svg width="26" height="26" viewBox="0 0 26 26" fill="none" stroke="#333" strokeWidth="1.5"><path d="M2 25 C2 12 12 2 25 2 M7 25 C7 15 15 7 25 7 M12 25 C12 18 18 12 25 12" /><circle cx="20" cy="21" r="3.5" fill="#111" stroke="none" /></svg></div>
    <div className="w-[44px] h-full flex items-center justify-center"><svg width="32" height="32" viewBox="0 0 32 32" fill="none" stroke="#222" strokeWidth="1.6"><path d="M1 11 H7 L15 3 V29 L7 21 H1Z" /><path d="M19 12 C21 14 21 18 19 20" /><path d="M23 7 C27 12 27 20 23 25" stroke="#999" /><path d="M27 3 C32 10 32 22 27 29" stroke="#bbb" /></svg></div>
    <div className="w-[46px] h-full flex items-center justify-center text-[28px] text-[#111]">中</div>
    <div className="w-[146px] h-full flex flex-col items-center justify-center text-[24px] leading-[37px] text-[#111]"><span>21:27:49</span><span>2021/9/24</span></div>
    <div className="w-[78px] h-full relative shrink-0">
      <svg width="32" height="34" viewBox="0 0 32 34" className="absolute left-[23px] top-[20px]"><path d="M0 0 H32 V26 H16 L8 33 V26 H0Z" fill="#0a0a0a" /><path d="M5 7 H27 M5 13 H27 M5 19 H20" stroke="#fff" strokeWidth="2" /></svg>
      <div className="absolute left-[38px] top-[37px] w-[32px] h-[33px] rounded-full bg-[#c8c8cc] border-2 border-[#8a8a8e] flex items-center justify-center text-[22px] font-bold text-black leading-none">1</div>
    </div>
    <div className="w-[19px] shrink-0" />
    <div className="w-px h-full bg-[#b8b8c4] shrink-0" />
    <div className="w-[8px] shrink-0" />
  </div>
);

export default function App() {
  return (
    <div className={`w-[2560px] h-[1600px] overflow-hidden flex flex-col bg-[#8d89d8] ${UI}`}>
      <div className="relative flex-1 min-h-0 flex justify-between">
        <div className="grid grid-flow-col grid-rows-[repeat(7,208px)] grid-cols-[repeat(4,150px)] h-fit">
          {left.map((it, i) => <DeskIcon key={i} it={it} />)}
        </div>
        <div className="mr-[10px] grid grid-cols-[repeat(6,150px)] auto-rows-[208px] h-fit">
          {["php函数.txt", "事项.txt", "单词.txt", "知识点.txt", "笔记.txt", "自律.txt"].map((n) => <TxtFile key={n} name={n} />)}
          <div className="col-start-5"><TxtFile name="nginx.txt" /></div>
          <TxtFile name="pdo.txt" />
        </div>
        <VmWindow />
        <Notepad />
        <div className="absolute left-[1691px] top-[702px] w-[88px] h-[2px] border-b-2 border-dotted border-[#333]" />
        <Candidates />
        <svg width="20" height="36" viewBox="0 0 20 36" className="absolute left-[1054px] top-[682px]"><path d="M3 2 H8 L10 4 L12 2 H17 M10 4 V32 M3 34 H8 L10 32 L12 34 H17" fill="none" stroke="#111" strokeWidth="2.5" /></svg>
        <Timer />
      </div>
      <Taskbar />
    </div>
  );
}
